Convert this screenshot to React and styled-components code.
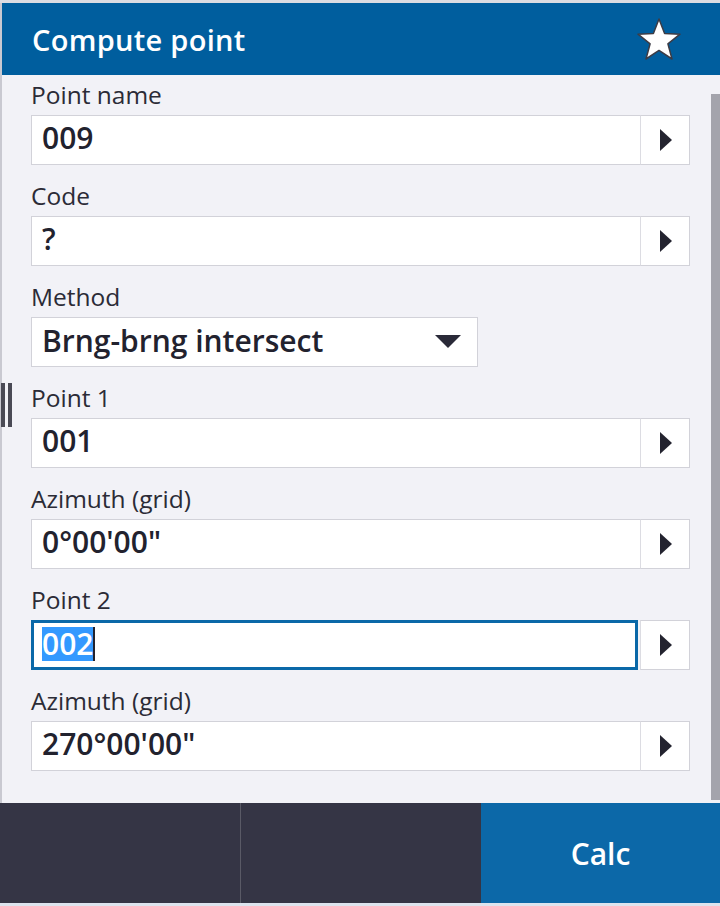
import React from 'react';
import styled, { createGlobalStyle } from 'styled-components';

const GlobalStyle = createGlobalStyle`
  html, body {
    margin: 0;
    padding: 0;
    background: #dde3ec;
  }
  * { box-sizing: border-box; }
`;

const Frame = styled.div`
  width: 720px;
  height: 906px;
  display: flex;
  flex-direction: column;
  border-top: 3px solid #dcdce2;
  border-bottom: 3px solid #dde4ee;
  font-family: "Open Sans", "Noto Sans", sans-serif;
  position: relative;
  overflow: hidden;
`;

const Header = styled.header`
  height: 72px;
  flex: none;
  display: flex;
  align-items: center;
  justify-content: space-between;
  background: #005e9e;
  border-left: 2px solid #c9c9d1;
  padding: 0 38px 0 30px;
`;

const Title = styled.h1`
  margin: 0;
  color: #ffffff;
  font-size: 29px;
  font-weight: 600;
  letter-spacing: 0.3px;
`;

const Body = styled.main`
  flex: 1;
  display: flex;
  background: #f2f2f7;
  border-left: 2px solid #c9c9d1;
  min-height: 0;
`;

const Form = styled.div`
  flex: 1;
  padding: 6px 21px 0 29px;
`;

const ScrollTrack = styled.div`
  width: 9px;
  flex: none;
  padding-top: 19px;
  padding-bottom: 3px;
  display: flex;
`;

const ScrollThumb = styled.div`
  flex: 1;
  background: #a4a4ac;
`;

const Field = styled.div`
  margin-bottom: 17px;
`;

const Label = styled.div`
  font-size: 24.5px;
  line-height: 28px;
  color: #2b2b36;
  margin-bottom: 6px;
`;

const InputRow = styled.div`
  display: flex;
  height: 50px;
  width: 100%;
`;

const Input = styled.div`
  flex: 1;
  display: flex;
  align-items: center;
  background: #ffffff;
  border: ${p => (p.$focused ? '3px solid #0a68a8' : '1px solid #d2d2d9')};
  padding: ${p => (p.$focused ? '0 0 3px 8px' : '0 0 5px 10px')};
  font-size: 30px;
  font-weight: 600;
  color: #22222e;
`;

const Selected = styled.span`
  background: #3399ff;
  color: #ffffff;
  line-height: 34px;
`;

const Caret = styled.span`
  display: inline-block;
  width: 2px;
  height: 34px;
  background: #22222e;
`;

const ArrowButton = styled.div`
  width: 50px;
  flex: none;
  display: flex;
  align-items: center;
  justify-content: center;
  background: #ffffff;
  border: 1px solid #d2d2d9;
  border-left: 1px solid #dcdce2;
  margin-left: ${p => (p.$afterFocus ? '2px' : '-1px')};
  padding-left: 2px;
`;

const Select = styled.div`
  width: 447px;
  height: 50px;
  display: flex;
  align-items: center;
  justify-content: space-between;
  background: #ffffff;
  border: 1px solid #d2d2d9;
  padding: 0 16px 4px 10px;
  font-size: 30px;
  font-weight: 600;
  color: #22222e;
  & > svg {
    margin-top: 4px;
  }
`;

const Handle = styled.div`
  position: absolute;
  left: 1px;
  top: 380px;
  height: 44px;
  width: 12px;
  display: flex;
  gap: 3px;
  & > span {
    width: 4px;
    background: #4a4a55;
  }
`;

const Footer = styled.footer`
  height: 100px;
  flex: none;
  display: grid;
  grid-template-columns: 240px 1px 239px 1px 239px;
`;

const FooterButton = styled.button`
  border: none;
  margin: 0;
  background: ${p => (p.$primary ? '#0c68a8' : '#353545')};
  color: #ffffff;
  font-family: "Open Sans", "Noto Sans", sans-serif;
  font-size: 30px;
  font-weight: 600;
  padding: 0;
`;

const Divider = styled.div`
  background: ${p => p.$color};
`;

const Star = () => (
  <svg width="46" height="44" viewBox="0 0 46 44">
    <polygon
      points="23,2 28.6,16.6 44,17.2 31.9,26.8 36,42 23,33.4 10,42 14.1,26.8 2,17.2 17.4,16.6"
      fill="#ffffff"
      stroke="#3c3c46"
      strokeWidth="1.5"
      strokeLinejoin="round"
    />
  </svg>
);

const RightArrow = () => (
  <svg width="14" height="24" viewBox="0 0 14 24">
    <polygon points="1,1 13,12 1,23" fill="#23232f" />
  </svg>
);

const DownArrow = () => (
  <svg width="26" height="14" viewBox="0 0 26 14">
    <polygon points="0,0 26,0 13,13" fill="#2a2a38" />
  </svg>
);

const fields = [
  { label: 'Point name', value: '009' },
  { label: 'Code', value: '?' },
  { label: 'Method', value: 'Brng-brng intersect', dropdown: true },
  { label: 'Point 1', value: '001' },
  { label: 'Azimuth (grid)', value: '0°00\'00"' },
  { label: 'Point 2', value: '002', focused: true },
  { label: 'Azimuth (grid)', value: '270°00\'00"' },
];

const App = () => {
  return (
    <>
      <GlobalStyle />
      <Frame>
        <Header>
          <Title>Compute point</Title>
          <Star />
        </Header>
        <Body>
          <Form>
            {fields.map((f, i) => (
              <Field key={i}>
                <Label>{f.label}</Label>
                {f.dropdown ? (
                  <Select>
                    {f.value}
                    <DownArrow />
                  </Select>
                ) : (
                  <InputRow>
                    <Input $focused={f.focused}>
                      {f.focused ? (
                        <>
                          <Selected>{f.value}</Selected>
                          <Caret />
                        </>
                      ) : (
                        f.value
                      )}
                    </Input>
                    <ArrowButton $afterFocus={f.focused}>
                      <RightArrow />
                    </ArrowButton>
                  </InputRow>
                )}
              </Field>
            ))}
          </Form>
          <ScrollTrack>
            <ScrollThumb />
          </ScrollTrack>
        </Body>
        <Footer>
          <FooterButton />
          <Divider $color="#5a5a66" />
          <FooterButton />
          <Divider $color="#353545" />
          <FooterButton $primary>Calc</FooterButton>
        </Footer>
        <Handle>
          <span />
          <span />
        </Handle>
      </Frame>
    </>
  );
};

export default App;
